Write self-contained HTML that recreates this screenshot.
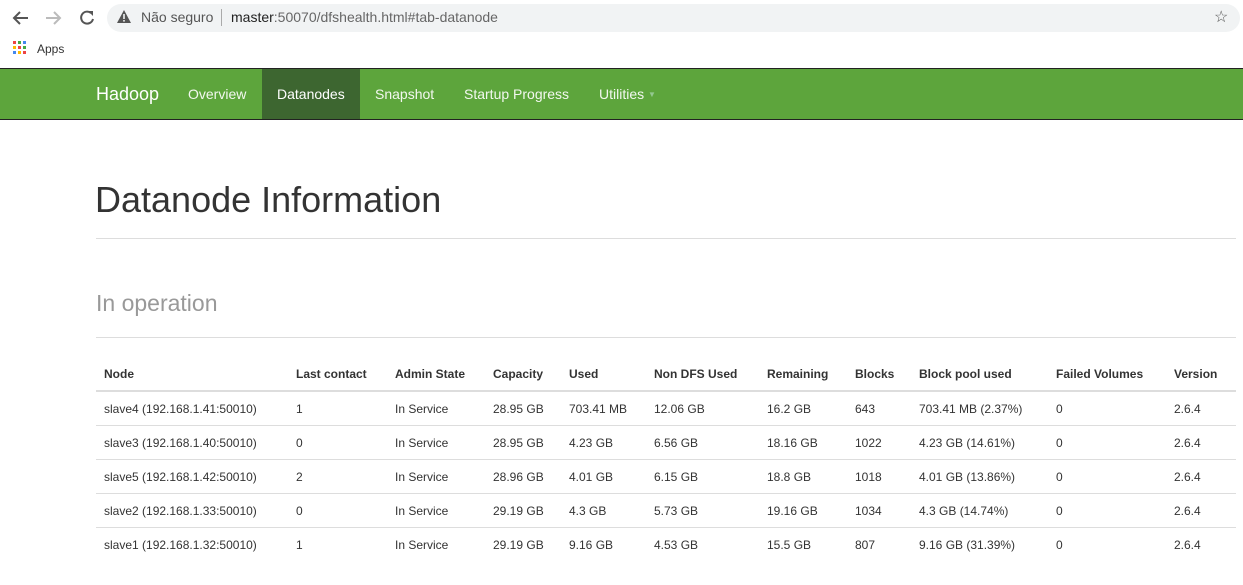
<!DOCTYPE html>
<html><head><meta charset="utf-8"><style>
*{margin:0;padding:0;box-sizing:border-box}
body{width:1243px;height:585px;overflow:hidden;background:#fff;font-family:"Liberation Sans",sans-serif;position:relative;color:#333}
.a{position:absolute;white-space:nowrap}
.url{position:absolute;left:107px;top:4px;width:1133px;height:28px;background:#f1f3f4;border-radius:14px}
.nav{position:absolute;left:0;top:68px;width:1243px;height:52px;background:#5da53c;border-top:1px solid #222;border-bottom:1px solid #222}
.nav .a{color:#fff;font-size:14px;top:17px;opacity:.92}
.act{position:absolute;left:262px;top:0;width:98px;height:50px;background:#3d6630}
.th{font-size:12px;font-weight:bold;top:367px}
.td{font-size:12px}
.hr{position:absolute;left:96px;width:1140px;height:1px;background:#ddd}
</style></head><body>
<svg class="a" style="left:11px;top:8px" width="90" height="20" viewBox="0 0 90 20">
<path d="M17 10H3M9 4L3 10l6 6" stroke="#555" stroke-width="2" fill="none"/>
<path d="M35 10h14M43 4l6 6-6 6" stroke="#bbb" stroke-width="2" fill="none"/>
<path d="M80 5a6 6 0 1 0 2 6" stroke="#555" stroke-width="2" fill="none"/><path d="M77 3h5v5z" fill="#555"/>
</svg>
<div class="url"></div>
<svg class="a" style="left:117px;top:10px" width="14" height="13"><path d="M7 0L14 13H0z" fill="#555"/><rect x="6.2" y="4" width="1.6" height="5" fill="#f1f3f4"/><rect x="6.2" y="10" width="1.6" height="1.6" fill="#f1f3f4"/></svg>
<div class="a" style="left:141px;top:9px;font-size:14px;color:#555">Não seguro</div>
<div class="a" style="left:221px;top:9px;width:1px;height:17px;background:#aaa"></div>
<div class="a" style="left:231px;top:9px;font-size:14px;color:#222">master<span style="color:#666">:50070/dfshealth.html#tab-datanode</span></div>
<div class="a" style="left:1214px;top:7px;font-size:16px;color:#555">☆</div>
<svg class="a" style="left:13px;top:41px" width="14" height="14"><rect x="0" y="0" width="3" height="3" fill="#e44"/><rect x="5" y="0" width="3" height="3" fill="#4a4"/><rect x="10" y="0" width="3" height="3" fill="#48e"/><rect x="0" y="5" width="3" height="3" fill="#fb0"/><rect x="5" y="5" width="3" height="3" fill="#e44"/><rect x="10" y="5" width="3" height="3" fill="#4a4"/><rect x="0" y="10" width="3" height="3" fill="#48e"/><rect x="5" y="10" width="3" height="3" fill="#fb0"/><rect x="10" y="10" width="3" height="3" fill="#e44"/></svg>
<div class="a" style="left:37px;top:42px;font-size:12px;color:#333">Apps</div>
<div class="nav"><div class="act"></div>
<div class="a" style="left:96px;top:15px;font-size:18px;opacity:1">Hadoop</div>
<div class="a" style="left:188px">Overview</div>
<div class="a" style="left:277px;opacity:1">Datanodes</div>
<div class="a" style="left:375px">Snapshot</div>
<div class="a" style="left:464px">Startup Progress</div>
<div class="a" style="left:599px">Utilities <span style="font-size:8px;color:#9c9;position:relative;top:-2px">▼</span></div>
</div>
<div class="a" style="left:95px;top:179px;font-size:36px;color:#333">Datanode Information</div>
<div class="hr" style="top:238px"></div>
<div class="a" style="left:96px;top:290px;font-size:23px;color:#999">In operation</div>
<div class="hr" style="top:337px"></div>
<div class="a th" style="left:104px">Node</div><div class="a th" style="left:296px">Last contact</div><div class="a th" style="left:395px">Admin State</div><div class="a th" style="left:493px">Capacity</div><div class="a th" style="left:569px">Used</div><div class="a th" style="left:654px">Non DFS Used</div><div class="a th" style="left:767px">Remaining</div><div class="a th" style="left:855px">Blocks</div><div class="a th" style="left:919px">Block pool used</div><div class="a th" style="left:1056px">Failed Volumes</div><div class="a th" style="left:1174px">Version</div>
<div class="hr" style="top:390px;height:2px"></div>
<div id="rows"></div>
<script>
var d=[["slave4 (192.168.1.41:50010)","1","In Service","28.95 GB","703.41 MB","12.06 GB","16.2 GB","643","703.41 MB (2.37%)","0","2.6.4"],
["slave3 (192.168.1.40:50010)","0","In Service","28.95 GB","4.23 GB","6.56 GB","18.16 GB","1022","4.23 GB (14.61%)","0","2.6.4"],
["slave5 (192.168.1.42:50010)","2","In Service","28.96 GB","4.01 GB","6.15 GB","18.8 GB","1018","4.01 GB (13.86%)","0","2.6.4"],
["slave2 (192.168.1.33:50010)","0","In Service","29.19 GB","4.3 GB","5.73 GB","19.16 GB","1034","4.3 GB (14.74%)","0","2.6.4"],
["slave1 (192.168.1.32:50010)","1","In Service","29.19 GB","9.16 GB","4.53 GB","15.5 GB","807","9.16 GB (31.39%)","0","2.6.4"]];
var x=[104,296,395,493,569,654,767,855,919,1056,1174],h="";
d.forEach(function(r,i){var y=402+i*34;r.forEach(function(c,j){h+='<div class="a td" style="left:'+x[j]+'px;top:'+y+'px">'+c+'</div>'});if(i<4)h+='<div class="hr" style="top:'+(y+23)+'px"></div>'});
document.getElementById("rows").innerHTML=h;
</script>
</body></html>
